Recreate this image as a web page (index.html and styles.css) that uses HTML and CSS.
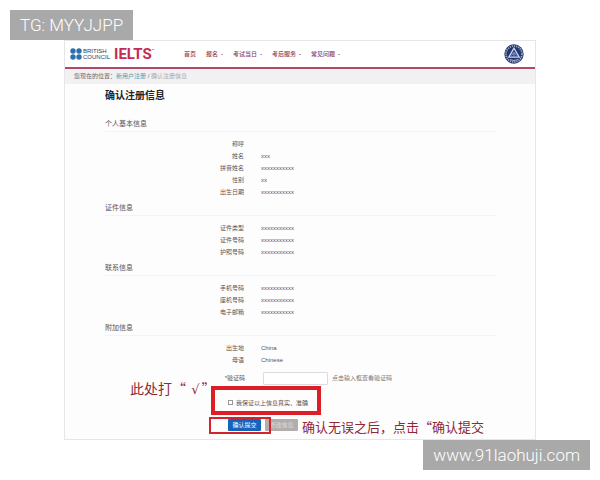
FILE: index.html
```html
<!DOCTYPE html>
<html lang="zh-CN">
<head>
  <meta charset="UTF-8" />
  <meta name="viewport" content="width=device-width, initial-scale=1.0"/>
  <title>确认注册信息</title>
  <link rel="stylesheet" href="styles.css">
</head>
<body>

  <div class="tag tag-top">TG: MYYJJPP</div>

  <div class="card">
    <header class="header">
      <div class="logo">
        <svg class="dots" viewBox="0 0 12 12">
          <circle cx="3" cy="3" r="2.7"/>
          <circle cx="9" cy="3" r="2.7"/>
          <circle cx="3" cy="9" r="2.7"/>
          <circle cx="9" cy="9" r="2.7"/>
        </svg>
        <span class="council">BRITISH<br>COUNCIL</span>
        <span class="ielts">IELTS<sup>™</sup></span>
      </div>
      <nav class="nav">
        <a href="#">首页</a>
        <a href="#" class="drop">报名</a>
        <a href="#" class="drop">考试当日</a>
        <a href="#" class="drop">考后服务</a>
        <a href="#" class="drop">常见问题</a>
      </nav>
      <svg class="emblem" viewBox="0 0 20 20">
        <circle cx="10" cy="10" r="9.7" fill="#26396f"/>
        <circle cx="10" cy="10" r="8" fill="none" stroke="#a9b6d4" stroke-width="1.6" stroke-dasharray="1.2 1"/>
        <circle cx="10" cy="10" r="6.6" fill="#213672"/>
        <path d="M10 4.2 L4.8 13.2 H15.2 Z" fill="none" stroke="#cbd5e8" stroke-width="1.3"/>
        <path d="M7.5 11.5 L10 8.2 L12.5 11.5 M10 9 V13" fill="none" stroke="#8fa3cf" stroke-width="1"/>
        <path d="M6 15.6 Q10 17.4 14 15.6" fill="none" stroke="#a9b6d4" stroke-width="1"/>
      </svg>
    </header>

    <div class="crumbs">您现在的位置：<a href="#">新用户注册</a> / <span>确认注册信息</span></div>

    <form class="content">
      <h1>确认注册信息</h1>

      <section>
        <h2>个人基本信息</h2>
        <dl>
          <dt>称呼</dt><dd></dd>
          <dt>姓名</dt><dd>xxx</dd>
          <dt>拼音姓名</dt><dd>xxxxxxxxxxx</dd>
          <dt>性别</dt><dd>xx</dd>
          <dt>出生日期</dt><dd>xxxxxxxxxxx</dd>
        </dl>
      </section>

      <section>
        <h2>证件信息</h2>
        <dl>
          <dt>证件类型</dt><dd>xxxxxxxxxxx</dd>
          <dt>证件号码</dt><dd>xxxxxxxxxxx</dd>
          <dt>护照号码</dt><dd>xxxxxxxxxxx</dd>
        </dl>
      </section>

      <section>
        <h2>联系信息</h2>
        <dl>
          <dt>手机号码</dt><dd>xxxxxxxxxxx</dd>
          <dt>座机号码</dt><dd>xxxxxxxxxxx</dd>
          <dt>电子邮箱</dt><dd>xxxxxxxxxxx</dd>
        </dl>
      </section>

      <section>
        <h2>附加信息</h2>
        <dl>
          <dt>出生地</dt><dd>China</dd>
          <dt>母语</dt><dd>Chinese</dd>
        </dl>
      </section>

      <div class="captcha">
        <label for="code">*验证码</label>
        <input type="text" id="code">
        <span>点击输入框查看验证码</span>
      </div>

      <div class="agree">
        <input type="checkbox" id="agree">
        <label for="agree">我保证以上信息真实、准确</label>
        <span class="note note-check">此处打“ <span class="tick">√</span>”</span>
      </div>

      <div class="actions">
        <button type="submit" class="submit">确认提交</button>
        <button type="button" class="edit">修改信息</button>
        <span class="frame"></span>
        <span class="note note-submit">确认无误之后，点击“确认提交</span>
      </div>
    </form>
  </div>

  <div class="tag tag-bottom">www.91laohuji.com</div>

</body>
</html>
```

FILE: styles.css
```css
body {
  margin: 0;
  background: #fff;
  font-family: "Liberation Sans", "Noto Sans CJK SC", sans-serif;
  font-size: 6px;
  line-height: 12px;
  color: #555;
}

a {
  text-decoration: none;
}

.tag {
  position: absolute;
  box-sizing: border-box;
  height: 30px;
  padding: 0 10px;
  background: #a9a9a9;
  color: #fff;
  font-family: Roboto, sans-serif;
  font-weight: 300;
  font-size: 17px;
  line-height: 30px;
  z-index: 10;
}

.tag-top {
  top: 10px;
  left: 10px;
}

.tag-bottom {
  right: 10px;
  bottom: 10px;
}

.card {
  margin: 40px 64px 0;
  border: 1px solid #e6e6e8;
  background: #fefdfe;
}

.header {
  display: flex;
  align-items: center;
  height: 26px;
  padding: 0 11px 0 5px;
  border-bottom: 2px solid #b04a66;
  background: #fff;
}

.logo {
  display: flex;
  align-items: center;
  width: 114px;
}

.dots {
  width: 12px;
  height: 12px;
  fill: #2b6fae;
}

.council {
  margin-left: 1px;
  color: #2f3d55;
  line-height: 6px;
}

.ielts {
  margin-left: 4px;
  color: #c42b55;
  font-family: Roboto, sans-serif;
  font-weight: 700;
  font-size: 15px;
  line-height: 16px;
}

.ielts sup {
  font-size: 4px;
  line-height: 0;
  vertical-align: 7px;
}

.nav {
  display: flex;
  flex: 1;
  gap: 10px;
}

.nav a {
  color: #8c3a50;
  font-weight: 500;
}

.nav .drop::after {
  content: "";
  display: inline-block;
  margin-left: 3px;
  border: 1px solid transparent;
  border-top-color: #8c3a50;
  border-bottom: 0;
  vertical-align: 1px;
}

.emblem {
  width: 20px;
  height: 20px;
}

.crumbs {
  height: 15px;
  padding: 0 9px;
  background: #f1f0f2;
  line-height: 14px;
  color: #666;
}

.crumbs a {
  color: #4f9fae;
}

.crumbs span {
  color: #aaa;
}

.content {
  padding: 4px 39px 8px 40px;
}

h1 {
  margin: 0 0 12px;
  color: #222;
  font-size: 10px;
  font-weight: 700;
  line-height: 16px;
}

h2 {
  margin: 0 0 6px;
  border-bottom: 1px solid #f3f2f4;
  color: #555;
  font-size: 7px;
  font-weight: 400;
  line-height: 15px;
}

dl {
  display: grid;
  grid-template-columns: 139px 1fr;
  grid-auto-rows: 12px;
  column-gap: 17px;
  margin: 0 0 2px;
}

dt {
  text-align: right;
}

dd {
  margin: 0;
}

.captcha {
  display: flex;
  align-items: center;
  height: 14px;
  margin-top: 5px;
}

.captcha label {
  width: 140px;
  text-align: right;
}

.captcha input {
  box-sizing: border-box;
  width: 65px;
  height: 13px;
  margin: 0 4px 0 18px;
  padding: 0 2px;
  border: 1px solid #dcdce0;
  border-radius: 1px;
  background: #fff;
  font-size: 6px;
}

.captcha span {
  color: #777;
}

.agree {
  position: relative;
  display: flex;
  align-items: center;
  box-sizing: border-box;
  width: 110px;
  height: 29px;
  margin: 1px 0 4px 106px;
  padding: 4px 0 0 13px;
  border: 4px solid #dc1f26;
  white-space: nowrap;
}

.agree input {
  appearance: none;
  box-sizing: border-box;
  width: 5px;
  height: 5px;
  margin: 0 3px 0 0;
  border: 1px solid #999;
  background: #fff;
}

.actions {
  position: relative;
  display: flex;
  gap: 4px;
  margin-left: 123px;
}

.actions button {
  width: 33px;
  height: 12px;
  padding: 0;
  border: 0;
  border-radius: 1px;
  color: #fff;
  font-family: inherit;
  font-size: 6px;
  line-height: 12px;
}

.actions .submit {
  background: #1264bd;
}

.actions .edit {
  background: #b3aeae;
  color: #dedada;
}

/* red marks drawn over the form */
.frame {
  position: absolute;
  top: -2px;
  left: -19px;
  box-sizing: border-box;
  width: 62px;
  height: 17px;
  border: 2px solid #d3242c;
}

.note {
  position: absolute;
  color: #8f2736;
  font-family: "Noto Sans CJK SC", sans-serif;
  white-space: nowrap;
}

.note-check {
  top: -12px;
  left: -85px;
  font-size: 14px;
  line-height: 20px;
}

.tick {
  margin: 0 2px;
  font-family: "DejaVu Sans", sans-serif;
  font-size: 13px;
}

.note-submit {
  top: -2px;
  left: 74px;
  font-size: 13px;
  line-height: 20px;
}
```
